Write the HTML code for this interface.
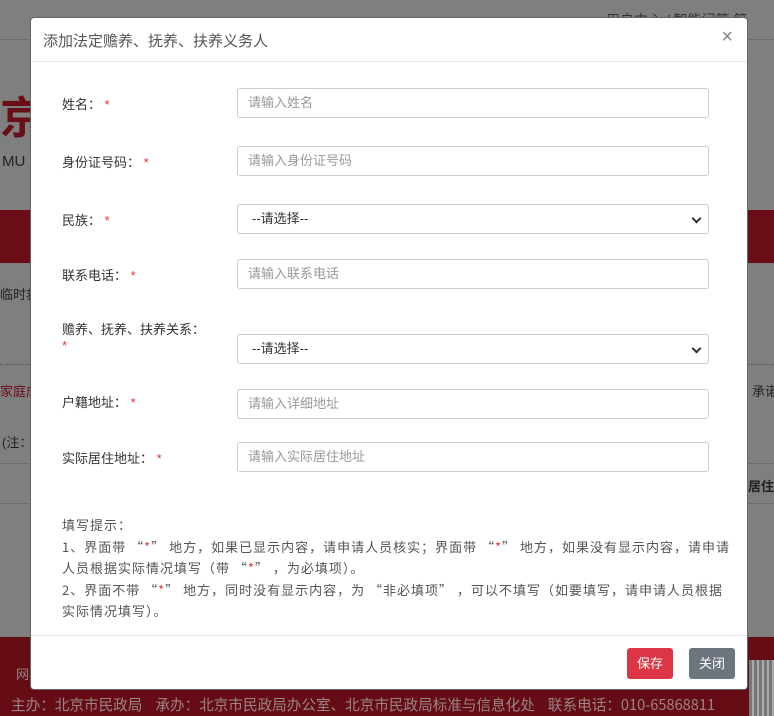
<!DOCTYPE html>
<html><head><meta charset="utf-8"><style>
*{box-sizing:border-box;margin:0;padding:0}
body{width:774px;height:716px;overflow:hidden;position:relative;background:#7f7f7f;font-family:"Liberation Sans","Noto Sans CJK SC",sans-serif;font-size:13px;color:#333}
.abs{position:absolute;white-space:nowrap}
.modal{position:absolute;left:30px;top:17px;width:718px;height:673px;background:#fff;border-radius:4px;border:1px solid #666}
.hd{height:44px;border-bottom:1px solid #e5e5e5;padding:12px 12px;font-size:15px;color:#555;position:relative}
.x{position:absolute;right:14px;top:8px;font-size:20px;color:#888}
.lbl{position:absolute;left:31px;font-size:13px;color:#333}
.lbl b{color:#e33;font-weight:normal}
.in{position:absolute;left:206px;width:472px;height:30px;border:1px solid #ccc;border-radius:3px;padding:0 10px;line-height:28px;color:#999;font-size:13px}
.sel{color:#333;padding-left:14px}
.sel:after{content:"";position:absolute;right:8px;top:10px;width:5px;height:5px;border-right:2px solid #333;border-bottom:2px solid #333;transform:rotate(45deg)}
.tips{position:absolute;left:31px;top:496px;width:700px;line-height:21.6px;color:#555;font-size:13px;font-family:"Noto Sans CJK SC",sans-serif;white-space:nowrap;letter-spacing:1px}
.tips b{color:#e33;font-weight:normal}
.ft{position:absolute;left:0;right:0;top:617px;border-top:1px solid #e5e5e5}
.btn{position:absolute;top:630px;width:46px;height:31px;border-radius:3px;color:#fff;text-align:center;line-height:31px;font-size:13px}
</style></head><body>
<div class="abs" style="left:0;top:0;width:774px;height:40px;border-bottom:1px solid #6d6d6d"></div>
<div class="abs" style="left:606px;top:10px;color:#333;font-size:14px">用户中心 / 智能问答 简</div>
<div class="abs" style="left:0;top:95px;color:#6a0f17;font-size:44px;font-weight:bold;line-height:48px">京</div>
<div class="abs" style="left:2px;top:153px;color:#222;font-size:15px">MU</div>
<div class="abs" style="left:0;top:210px;width:774px;height:53px;background:#6a0d16"></div>
<div class="abs" style="left:0;top:284px;color:#222">临时救</div>
<div class="abs" style="left:0;top:364px;width:774px;border-top:1px dotted #555"></div>
<div class="abs" style="left:0;top:381px;color:#6a0f17">家庭成</div>
<div class="abs" style="left:752px;top:381px;color:#222">承诺</div>
<div class="abs" style="left:2px;top:432px;color:#222">(注：</div>
<div class="abs" style="left:0;top:463px;width:774px;border-top:1px solid #6d6d6d"></div>
<div class="abs" style="left:748px;top:476px;color:#222;font-weight:bold">居住地</div>
<div class="abs" style="left:0;top:503px;width:774px;border-top:1px solid #6d6d6d"></div>
<div class="abs" style="left:0;top:637px;width:774px;height:79px;background:#650c14"></div>
<div class="abs" style="left:16px;top:664px;color:#9a8588">网</div>
<div class="abs" style="left:11px;top:694px;color:#9a8588;font-size:14.6px;font-family:'Noto Sans CJK SC',sans-serif">主办：北京市民政局&nbsp;&nbsp;&nbsp;&nbsp;承办：北京市民政局办公室、北京市民政局标准与信息化处&nbsp;&nbsp;&nbsp;&nbsp;联系电话：010-65868811</div>
<div class="abs" style="left:749px;top:660px;width:25px;height:56px;background:repeating-linear-gradient(90deg,#777 0 3px,#aaa 3px 5px)"></div>
<div class="modal">
<div class="hd">添加法定赡养、抚养、扶养义务人<span class="x">×</span></div>
<div class="lbl" style="top:76px">姓名： <b>*</b></div>
<div class="in" style="top:70px">请输入姓名</div>
<div class="lbl" style="top:134px">身份证号码： <b>*</b></div>
<div class="in" style="top:128px">请输入身份证号码</div>
<div class="lbl" style="top:192px">民族： <b>*</b></div>
<div class="in sel" style="top:186px">--请选择--</div>
<div class="lbl" style="top:247px">联系电话： <b>*</b></div>
<div class="in" style="top:241px">请输入联系电话</div>
<div class="lbl" style="top:301px">赡养、抚养、扶养关系：<br><b>*</b></div>
<div class="in sel" style="top:316px">--请选择--</div>
<div class="lbl" style="top:374px">户籍地址： <b>*</b></div>
<div class="in" style="top:371px">请输入详细地址</div>
<div class="lbl" style="top:430px">实际居住地址： <b>*</b></div>
<div class="in" style="top:424px">请输入实际居住地址</div>
<div class="tips">填写提示：<br>1、界面带 “<b>*</b>” 地方，如果已显示内容，请申请人员核实；界面带 “<b>*</b>” 地方，如果没有显示内容，请申请<br>人员根据实际情况填写（带 “<b>*</b>” ，为必填项）。<br>2、界面不带 “<b>*</b>” 地方，同时没有显示内容，为 “非必填项” ，可以不填写（如要填写，请申请人员根据<br>实际情况填写）。</div>
<div class="ft"></div>
<div class="btn" style="left:596px;background:#dc3545">保存</div>
<div class="btn" style="left:658px;background:#6c757d">关闭</div>
</div>
</body></html>
